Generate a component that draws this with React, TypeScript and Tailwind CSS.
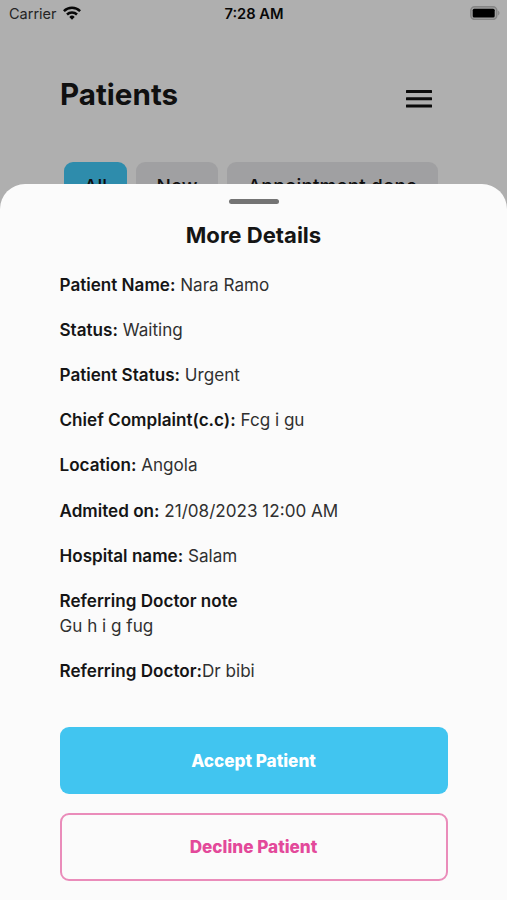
const details = [
  { label: "Patient Name:", value: " Nara Ramo" },
  { label: "Status:", value: " Waiting" },
  { label: "Patient Status:", value: " Urgent" },
  { label: "Chief Complaint(c.c):", value: " Fcg i gu" },
  { label: "Location:", value: " Angola" },
  { label: "Admited on:", value: " 21/08/2023 12:00 AM" },
  { label: "Hospital name:", value: " Salam" },
];

function StatusBar() {
  return (
    <div className="grid h-7 grid-cols-3 items-center pr-[7px] pl-[9px] text-[14.5px] leading-7">
      <div className="flex items-center gap-[6px] text-[#242424]">
        <span>Carrier</span>
        <svg className="mb-[2px] h-[14px] w-[18px]" viewBox="0 0 18 14" fill="none" stroke="#080808" strokeWidth="2.5">
          <path d="M.9 5.1a11.6 11.6 0 0 1 16.2 0" />
          <path d="M4 8.5a7.2 7.2 0 0 1 10 0" />
          <path d="M6.3 10.9a3.9 3.9 0 0 1 5.4 0L9 13.7Z" fill="#080808" stroke="none" />
        </svg>
      </div>
      <span className="-ml-px text-center text-[14.7px] font-semibold whitespace-nowrap text-[#080808]">7:28 AM</span>
      <svg className="mb-[2px] h-[14px] w-[30px] justify-self-end" viewBox="0 0 30 14">
        <rect x=".8" y=".8" width="26" height="12.6" rx="3.8" fill="#a1a1a1" stroke="#858585" strokeWidth="1.5" />
        <rect x="2.7" y="2.8" width="22" height="8.6" rx="1.5" fill="#000" />
        <path d="M28.1 4.8c1.8.7 1.8 3.9 0 4.6Z" fill="#858585" />
      </svg>
    </div>
  );
}

function PatientsScreen() {
  return (
    <div className="h-[225px] overflow-hidden">
      <StatusBar />
      <header className="mt-[46px] flex h-10 items-center justify-between pr-[75px] pl-[60px]">
        <h1 className="text-[29.6px] leading-10 font-bold text-[#101010]">Patients</h1>
        <svg className="mt-[9px] h-[18px] w-[26px]" viewBox="0 0 26 18" fill="#0b0b0b">
          <rect y="0" width="26" height="3" rx=".5" />
          <rect y="7.3" width="26" height="3" rx=".5" />
          <rect y="14.6" width="26" height="3" rx=".5" />
        </svg>
      </header>
      <nav className="mt-[48px] ml-[64px] flex gap-[9px] text-[19px] font-medium text-[#101010]">
        <span className="flex h-[51px] w-[63px] items-center justify-center rounded-[9px] bg-[#2e8cac]">All</span>
        <span className="flex h-[51px] w-[82px] items-center justify-center rounded-[9px] bg-[#a0a0a2]">New</span>
        <span className="flex h-[51px] w-[211px] items-center justify-center rounded-[9px] bg-[#a0a0a2] tracking-[0.1px]">Appointment done</span>
      </nav>
    </div>
  );
}

export default function App() {
  return (
    <main className="relative h-[900px] w-full overflow-hidden bg-[#afafaf] font-['Inter',sans-serif]">
      <PatientsScreen />
      <section className="absolute inset-x-0 top-[184px] bottom-0 rounded-t-[25px] bg-[#fbfbfb] px-[59.5px] pt-[15px] text-[#151515]">
        <div className="mx-auto h-[5px] w-[50px] rounded-full bg-[#747474]" />
        <h2 className="mt-[15px] text-center text-[22.1px] leading-8 font-bold">More Details</h2>
        <div className="mt-[20.6px] flex flex-col gap-5 text-[17.1px] leading-[25.2px] whitespace-pre">
          {details.map((item) => (
            <p key={item.label}>
              <span className="font-semibold">{item.label}</span>
              <span className="text-[#303030]">{item.value}</span>
            </p>
          ))}
          <div>
            <p className="font-semibold">Referring Doctor note</p>
            <p className="text-[#303030]">Gu h i g fug</p>
          </div>
          <p>
            <span className="font-semibold">Referring Doctor:</span>
            <span className="text-[#303030]">Dr bibi</span>
          </p>
        </div>
        <div className="mt-[43.4px] flex flex-col gap-[19px] text-[17.15px] font-extrabold">
          <button className="h-[67px] w-full rounded-[9px] bg-[#41c5f0] pt-px text-white">Accept Patient</button>
          <button className="h-[68px] w-full rounded-[9px] border-2 border-[#ea8cba] text-[#e3499a]">Decline Patient</button>
        </div>
      </section>
    </main>
  );
}
